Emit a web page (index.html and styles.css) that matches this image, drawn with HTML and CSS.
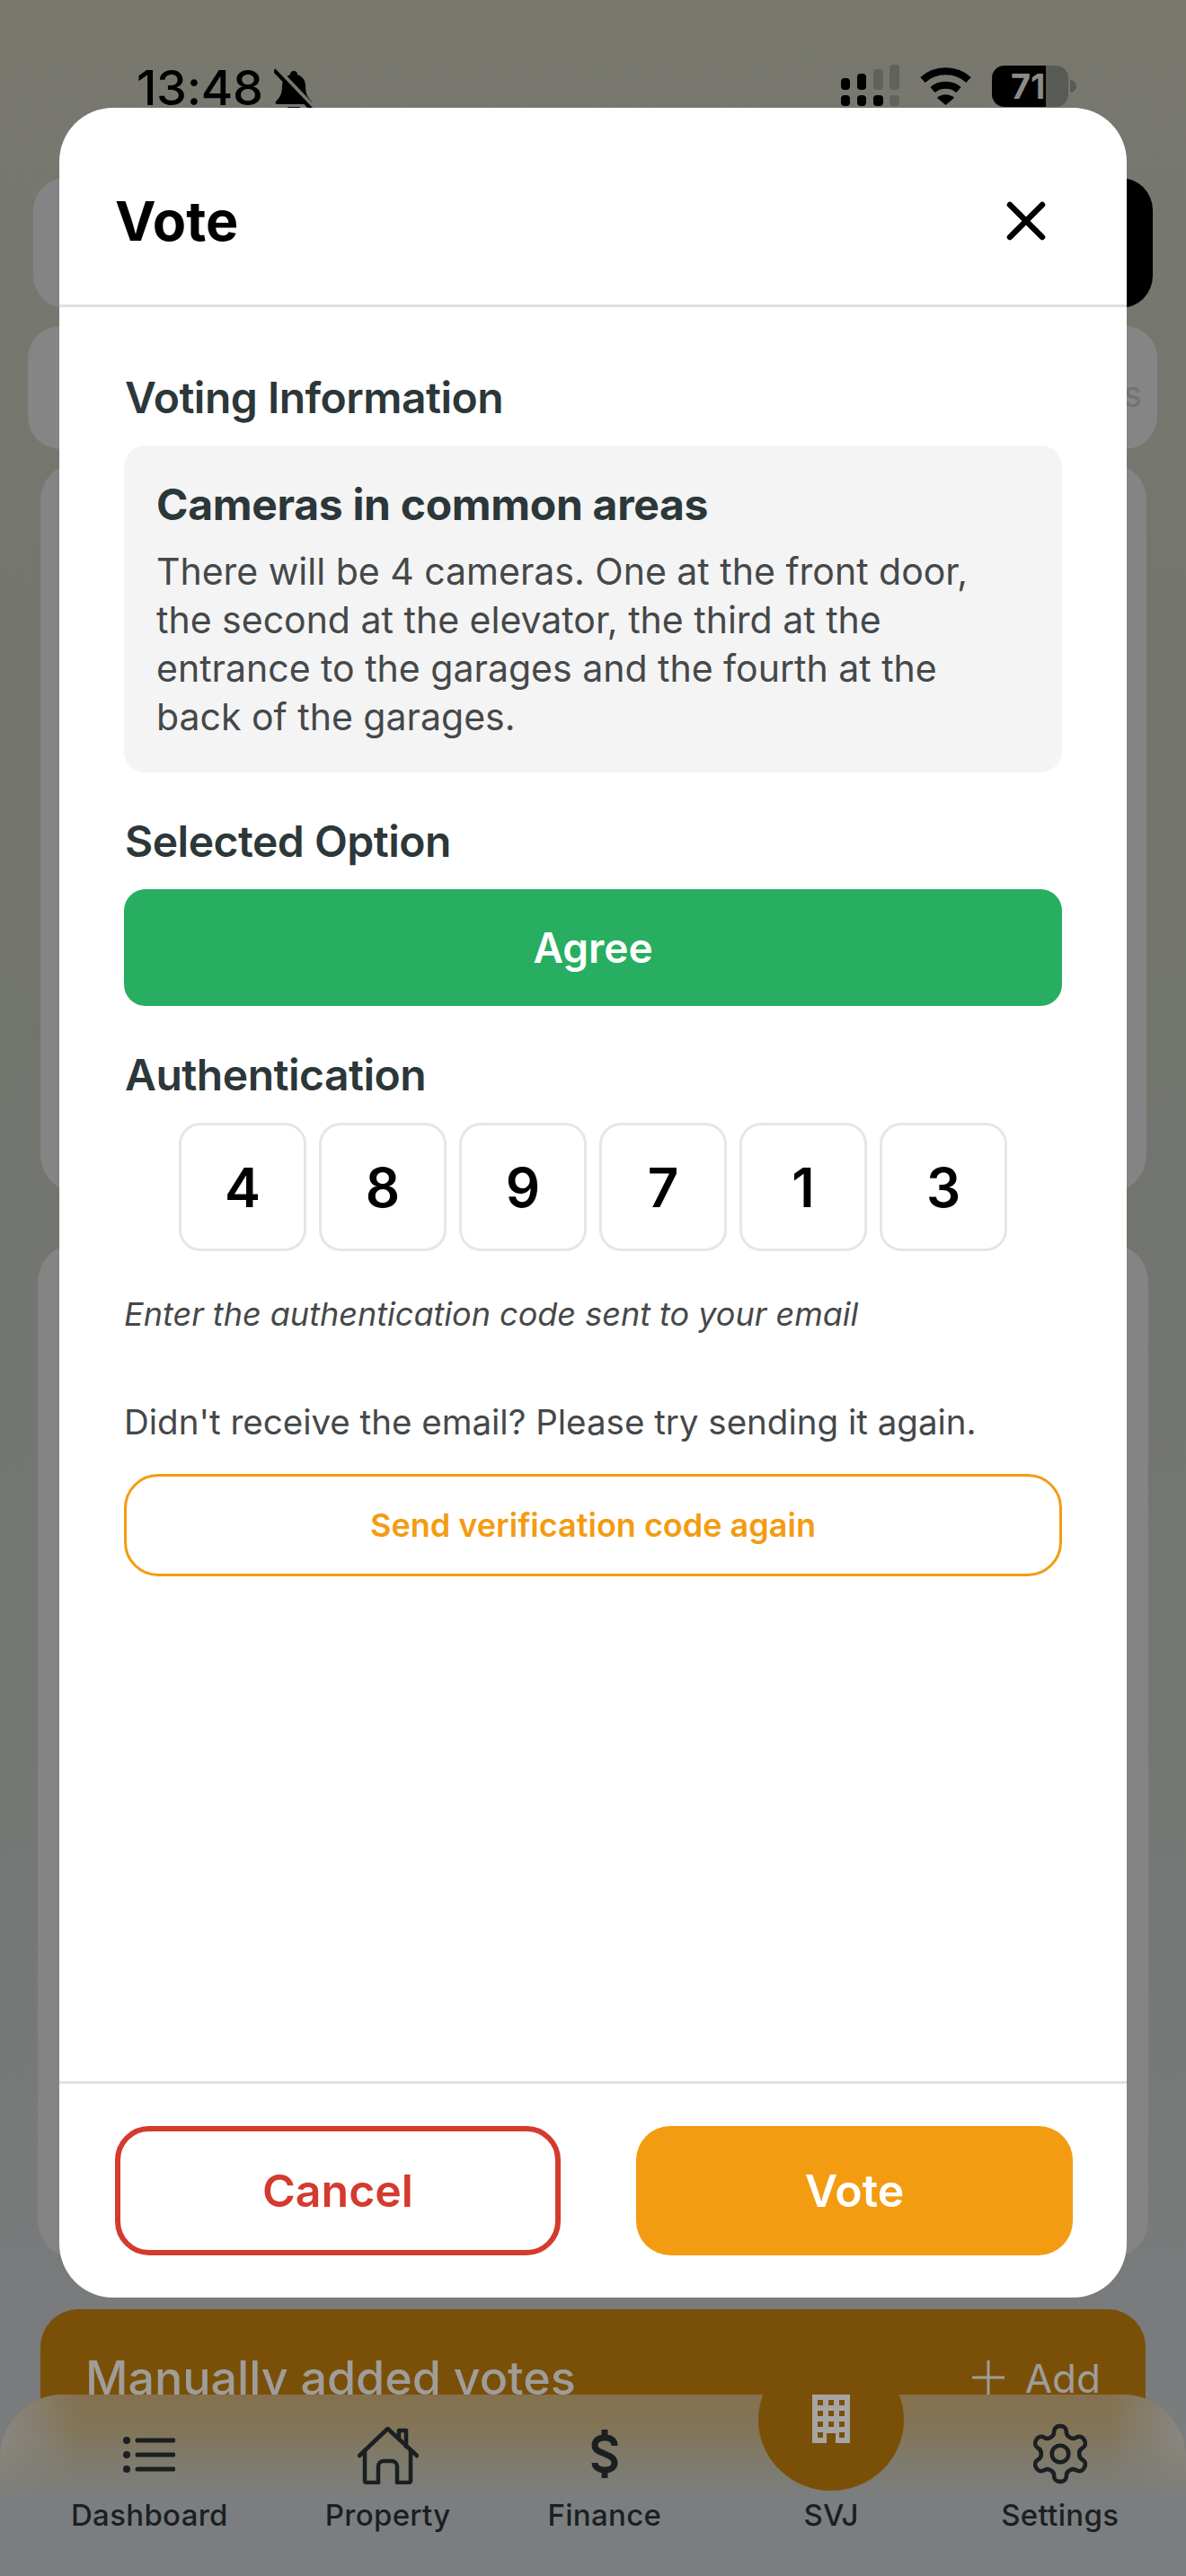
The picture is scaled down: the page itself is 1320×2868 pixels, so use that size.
FILE: index.html
```html
<!DOCTYPE html>
<html lang="en">
<head>
<meta charset="utf-8">
<title>Vote</title>
<link rel="stylesheet" href="styles.css">
</head>
<body>
<div class="screen">
  <header class="status">
    <div class="status-left">
      <span class="clock">13:48</span>
      <svg class="bell" viewBox="0 0 44 50" aria-hidden="true">
        <path d="M22 3c-3 0-4 2-4 4-6 2-9 7-9 13 0 8-2 12-7 17-1 2 0 3 2 3h36c2 0 3-1 2-3-5-5-7-9-7-17 0-6-3-11-9-13 0-2-1-4-4-4z"/>
        <path d="M15 43h14c-1 4-4 6-7 6s-6-2-7-6z"/>
        <path class="bell-gap" d="M2 0l40 42"/>
        <path class="bell-slash" d="M0 2l42 44"/>
      </svg>
    </div>
    <div class="status-right">
      <svg class="signal" viewBox="0 0 65 46" aria-hidden="true">
        <rect x="0" y="15" width="10" height="13" rx="4"/><rect x="18" y="10" width="10" height="18" rx="4"/>
        <rect class="dim" x="36" y="5" width="11" height="23" rx="4"/><rect class="dim" x="54" y="0" width="11" height="28" rx="4"/>
        <rect x="0" y="34" width="10" height="12" rx="4"/><rect x="18" y="34" width="10" height="12" rx="4"/>
        <rect x="36" y="34" width="11" height="12" rx="4"/><rect class="dim" x="54" y="34" width="11" height="12" rx="4"/>
      </svg>
      <svg class="wifi" viewBox="0 0 57 42" aria-hidden="true">
        <path class="arc" d="M3 14C17 1 40 1 54 14"/>
        <path class="arc" d="M14 25c8-7 21-7 29 0"/>
        <path d="M19 34c5-5 14-5 19 0l-9.500 8z"/>
      </svg>
      <div class="battery"><span class="battery-level">71</span></div>
      <span class="battery-nub"></span>
    </div>
  </header>

  <main class="backdrop">
    <div class="search-row"><div class="search-field"></div><div class="search-action"></div></div>
    <div class="info-strip"><span>s</span></div>
    <section class="panel panel-summary"></section>
    <section class="panel panel-results"></section>
    <section class="manual-votes">
      <h2>Manually added votes</h2>
      <span class="manual-add"><svg viewBox="0 0 36 38" aria-hidden="true"><path d="M18 0v38M0 19h36"/></svg>Add</span>
    </section>
  </main>

  <nav class="tabbar">
    <a class="tab">
      <svg class="tab-icon icon-list" viewBox="0 0 58 40" aria-hidden="true">
        <circle cx="4" cy="4" r="4"/><circle cx="4" cy="20" r="4"/><circle cx="4" cy="36" r="4"/>
        <path d="M16 4h40M16 20h40M16 36h40"/>
      </svg>
      <span>Dashboard</span>
    </a>
    <a class="tab">
      <svg class="tab-icon icon-house" viewBox="0 0 68 64" aria-hidden="true">
        <path d="M2 32L33.500 2 66 32"/>
        <path d="M46 13V4h8v18"/>
        <path d="M8 26v34a2 2 0 0 0 2 2h13V44a6 6 0 0 1 6-6h9a6 6 0 0 1 6 6v18h13a2 2 0 0 0 2-2V26"/>
      </svg>
      <span>Property</span>
    </a>
    <a class="tab">
      <svg class="tab-icon icon-dollar" viewBox="0 0 32 54" aria-hidden="true">
        <path d="M27 18c0-6-4-9-11-9S5 12 5 17.500s5 7 11 9.500 11 4.500 11 10-5 8-11 8-11-3-11-8"/>
        <path d="M16 0v9M16 45v9"/>
      </svg>
      <span>Finance</span>
    </a>
    <a class="tab tab-main">
      <span class="tab-fab">
        <svg class="icon-building" viewBox="0 0 42 54" aria-hidden="true">
          <path class="walls" d="M0 0h42v54H26V43h-10v11H0z"/>
          <g class="windows">
            <rect x="6" y="6" width="6" height="6"/><rect x="18" y="6" width="6" height="6"/><rect x="30" y="6" width="6" height="6"/>
            <rect x="6" y="18" width="6" height="6"/><rect x="18" y="18" width="6" height="6"/><rect x="30" y="18" width="6" height="6"/>
            <rect x="6" y="30" width="6" height="6"/><rect x="18" y="30" width="6" height="6"/><rect x="30" y="30" width="6" height="6"/>
            <rect x="6" y="42" width="6" height="6"/><rect x="30" y="42" width="6" height="6"/>
          </g>
        </svg>
      </span>
      <span>SVJ</span>
    </a>
    <a class="tab">
      <svg class="tab-icon icon-gear" viewBox="2 1 20 22" aria-hidden="true">
        <path d="M12.220 2h-.440a2 2 0 0 0-2 2v.180a2 2 0 0 1-1 1.730l-.430.250a2 2 0 0 1-2 0l-.150-.080a2 2 0 0 0-2.730.730l-.220.380a2 2 0 0 0 .730 2.730l.150.100a2 2 0 0 1 1 1.720v.510a2 2 0 0 1-1 1.740l-.150.090a2 2 0 0 0-.730 2.730l.220.380a2 2 0 0 0 2.730.730l.150-.080a2 2 0 0 1 2 0l.430.250a2 2 0 0 1 1 1.730V20a2 2 0 0 0 2 2h.440a2 2 0 0 0 2-2v-.180a2 2 0 0 1 1-1.730l.430-.250a2 2 0 0 1 2 0l.150.080a2 2 0 0 0 2.730-.730l.220-.390a2 2 0 0 0-.730-2.730l-.150-.080a2 2 0 0 1-1-1.740v-.500a2 2 0 0 1 1-1.740l.150-.090a2 2 0 0 0 .730-2.730l-.220-.380a2 2 0 0 0-2.730-.730l-.150.080a2 2 0 0 1-2 0l-.430-.250a2 2 0 0 1-1-1.730V4a2 2 0 0 0-2-2z"/>
        <circle cx="12" cy="12" r="3"/>
      </svg>
      <span>Settings</span>
    </a>
  </nav>

  <div class="modal" role="dialog" aria-label="Vote">
    <div class="modal-head">
      <h1>Vote</h1>
      <svg class="modal-close" viewBox="0 0 44 44" aria-hidden="true"><path d="M4 4l36 36M40 4L4 40"/></svg>
    </div>
    <div class="modal-body">
      <h3 class="field-label label-first">Voting Information</h3>
      <div class="info-box">
        <h4>Cameras in common areas</h4>
        <p>There will be 4 cameras. One at the front door, the second at the elevator, the third at the entrance to the garages and the fourth at the back of the garages.</p>
      </div>
      <h3 class="field-label">Selected Option</h3>
      <div class="option">Agree</div>
      <h3 class="field-label">Authentication</h3>
      <div class="code">
        <span class="code-cell">4</span><span class="code-cell">8</span><span class="code-cell">9</span>
        <span class="code-cell">7</span><span class="code-cell">1</span><span class="code-cell">3</span>
      </div>
      <p class="hint">Enter the authentication code sent to your email</p>
      <p class="resend-note">Didn't receive the email? Please try sending it again.</p>
      <button class="resend" type="button">Send verification code again</button>
    </div>
    <div class="modal-foot">
      <button class="btn btn-cancel" type="button">Cancel</button>
      <button class="btn btn-vote" type="button">Vote</button>
    </div>
  </div>
</div>
</body>
</html>
```

FILE: styles.css
```css
* { box-sizing: border-box; }

html, body { margin: 0; padding: 0; }

body {
  font-family: "Inter", "Liberation Sans", sans-serif;
  color: #000;
}

.screen {
  position: relative;
  width: 1320px;
  height: 2868px;
  overflow: hidden;
  background: linear-gradient(180deg, #78786f 0%, #72746e 40%, #747774 70%, #7b7d80 100%);
}

/* Status bar */
.status {
  height: 198px;
  padding: 72px 122px 0 152px;
  display: flex;
  justify-content: space-between;
  align-items: flex-start;
}
.status-left { display: flex; align-items: flex-start; gap: 12px; }
.clock { font-size: 54px; font-weight: 500; line-height: 52px; letter-spacing: -0.3px; }
.bell { width: 44px; height: 50px; margin-top: 4px; fill: #000; }
.bell-gap { fill: none; stroke: #77776f; stroke-width: 6; }
.bell-slash { fill: none; stroke: #000; stroke-width: 4; }
.status-right { display: flex; align-items: flex-start; }
.signal { width: 65px; height: 46px; margin-right: 23px; fill: #000; }
.signal .dim { fill: #60625d; }
.wifi { width: 57px; height: 42px; margin-top: 3px; margin-right: 23px; fill: #000; }
.wifi .arc { fill: none; stroke: #000; stroke-width: 8; }
.battery {
  width: 85px;
  height: 46px;
  margin-top: 1px;
  border-radius: 14px;
  background: linear-gradient(90deg, #000 0 60px, #585a55 60px);
  overflow: hidden;
}
.battery-level {
  display: block;
  padding-left: 21px;
  width: 60px;
  overflow: hidden;
  font-size: 38px;
  font-weight: 700;
  line-height: 46px;
  color: #8b8b87;
}
.battery-nub {
  width: 7px;
  height: 14px;
  margin: 17px 0 0 2px;
  border-radius: 0 7px 7px 0;
  background: #585a55;
}

/* Dimmed page behind the dialog */
.backdrop { display: flex; flex-direction: column; }
.search-row { height: 145px; margin: 0 37px; display: flex; }
.search-field { flex: 1; background: #848484; border-radius: 36px 0 0 36px; }
.search-action { width: 150px; background: #000; border-radius: 0 36px 36px 0; }
.info-strip {
  height: 137px;
  margin: 20px 32px 0 31px;
  padding: 56px 17px 0 0;
  background: #858585;
  border-radius: 36px;
  text-align: right;
  font-size: 40px;
  line-height: 40px;
  color: #727272;
}
.panel { background: #848484; border-radius: 42px; }
.panel-summary { height: 813px; margin: 15px 44px 0 45px; }
.panel-results { height: 1129px; margin: 57px 42px 0 42px; }
.manual-votes {
  height: 170px;
  margin: 57px 45px 0 45px;
  padding: 47px 50px 0 50px;
  display: flex;
  justify-content: space-between;
  align-items: flex-start;
  background: #7a5009;
  border-radius: 42px 42px 0 0;
  color: #9e9d9a;
}
.manual-votes h2 { margin: 0; font-size: 52px; font-weight: 500; line-height: 60px; }
.manual-add { display: flex; gap: 23px; font-size: 44px; font-weight: 400; line-height: 60px; }
.manual-add svg { width: 36px; height: 38px; margin-top: 10px; fill: none; stroke: #9e9d9a; stroke-width: 3; }

/* Tab bar: frosted look, warm near the top where the orange card sits behind it */
.tabbar {
  position: absolute;
  left: 0;
  right: 0;
  bottom: 0;
  height: 202px;
  padding: 34px 0 0 79px;
  display: flex;
  gap: 108px;
  border-radius: 70px 70px 0 0;
  background: linear-gradient(180deg, #85714f 0%, #827456 18%, #7e7b6e 38%, #7b7e80 58%);
}
.tabbar::before {
  content: "";
  position: absolute;
  inset: 0;
  border-radius: inherit;
  background: linear-gradient(90deg, #888782 0, rgba(136, 135, 130, 0) 90px, rgba(136, 135, 130, 0) calc(100% - 90px), #888782 100%);
  -webkit-mask-image: linear-gradient(180deg, #000 25%, transparent 60%);
  mask-image: linear-gradient(180deg, #000 25%, transparent 60%);
}
.tab {
  position: relative;
  display: flex;
  flex-direction: column;
  align-items: center;
  justify-content: flex-end;
  height: 122px;
  font-size: 33px;
  font-weight: 500;
  letter-spacing: 0.3px;
  line-height: 44px;
  color: #1b1f22;
}
.tab-icon { position: absolute; fill: none; stroke: #1b1f22; }
.icon-list { top: 13px; width: 58px; height: 40px; fill: #1b1f22; stroke-width: 5; stroke-linecap: round; }
.icon-list circle { stroke: none; }
.icon-house { top: 2px; width: 68px; height: 64px; stroke-width: 4.500; stroke-linejoin: round; stroke-linecap: round; }
.icon-dollar { top: 5px; width: 32px; height: 54px; stroke-width: 7; }
.icon-gear { top: -2px; width: 62px; height: 68px; stroke-width: 1.500; }
.tab-main { width: 162px; }
.tab-fab {
  position: absolute;
  left: 0;
  top: -85px;
  width: 162px;
  height: 158px;
  display: flex;
  align-items: flex-start;
  justify-content: center;
  padding-top: 51px;
  border-radius: 50%;
  background: #7a5009;
}
.icon-building { width: 42px; height: 54px; }
.icon-building .walls { fill: #a6a5a2; }
.icon-building .windows { fill: #7a5009; }

/* Dialog */
.modal {
  position: absolute;
  left: 66px;
  top: 120px;
  width: 1188px;
  height: 2438px;
  display: flex;
  flex-direction: column;
  background: #fff;
  border-radius: 60px;
  overflow: hidden;
}
.modal-head {
  height: 222px;
  padding: 32px 90px 0 62px;
  display: flex;
  align-items: center;
  justify-content: space-between;
  border-bottom: 3px solid #dfdfe1;
}
.modal-head h1 { margin: 0; font-size: 61px; font-weight: 700; line-height: 72px; }
.modal-close { width: 44px; height: 44px; fill: none; stroke: #000; stroke-width: 6.500; stroke-linecap: round; }
.modal-body { flex: 1; padding: 0 72px; }
.field-label {
  margin: 50px 0 26px 1px;
  font-size: 48px;
  font-weight: 600;
  line-height: 54px;
  letter-spacing: -0.5px;
  color: #2c3739;
}
.label-first { margin-top: 74px; }
.info-box {
  height: 364px;
  padding: 39px 36px 0;
  background: #f4f4f4;
  border-radius: 24px;
}
.info-box h4 { margin: 0 0 20px; font-size: 48px; font-weight: 700; line-height: 54px; letter-spacing: -0.3px; color: #2c3739; }
.info-box p { margin: 0; font-size: 41px; font-weight: 400; line-height: 54px; color: #454849; }
.option {
  height: 130px;
  display: flex;
  align-items: center;
  justify-content: center;
  background: #27ae60;
  border-radius: 24px;
  font-size: 46px;
  font-weight: 600;
  color: #fff;
}
.code { display: flex; justify-content: center; gap: 14px; }
.code-cell {
  width: 142px;
  height: 143px;
  display: flex;
  align-items: center;
  justify-content: center;
  border: 3px solid #e6e6e6;
  border-radius: 24px;
  font-size: 60px;
  font-weight: 600;
}
.hint { margin: 48px 0 0; font-size: 36px; font-style: italic; line-height: 44px; color: #454849; }
.resend-note { margin: 74px 0 0; font-size: 38.500px; line-height: 48px; color: #454849; }
.resend {
  width: 100%;
  height: 114px;
  margin-top: 34px;
  background: #fff;
  border: 3px solid #f39c12;
  border-radius: 38px;
  font-family: inherit;
  font-size: 36px;
  font-weight: 600;
  color: #f39c12;
}
.modal-foot {
  height: 241px;
  padding: 47px 60px 0 62px;
  display: flex;
  justify-content: space-between;
  align-items: flex-start;
  border-top: 3px solid #e2e2e2;
}
.btn {
  height: 144px;
  border-radius: 38px;
  font-family: inherit;
  font-size: 50px;
  font-weight: 600;
}
.btn-cancel { width: 496px; background: #fff; border: 6px solid #d43a2d; color: #d43a2d; }
.btn-vote { width: 486px; background: #f39c12; border: 0; color: #fff; }
```
